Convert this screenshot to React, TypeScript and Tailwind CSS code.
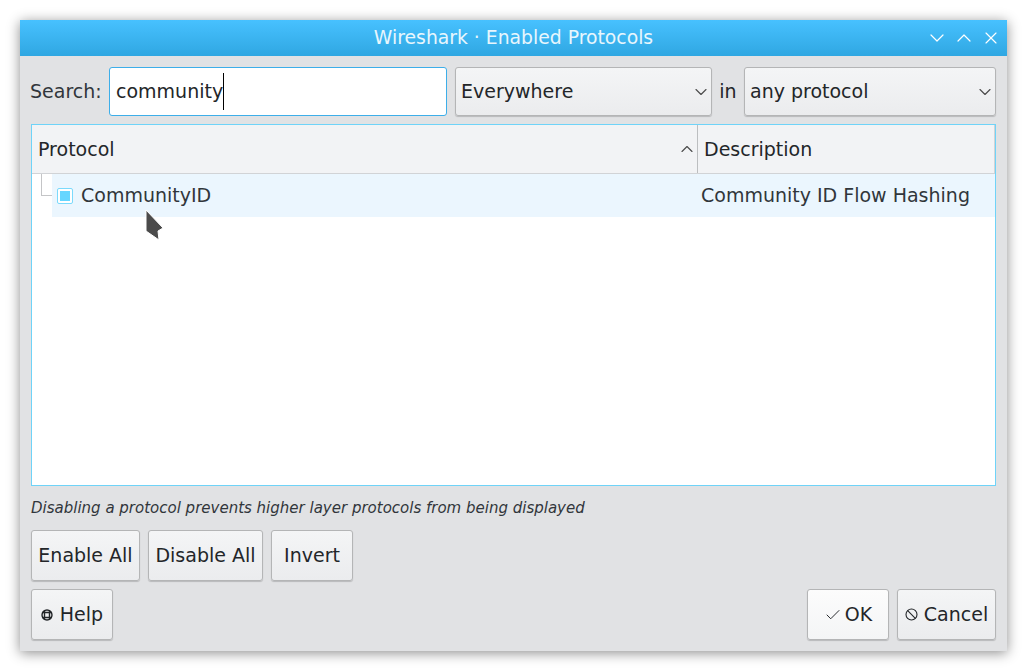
import { Check, ChevronDown, ChevronUp, X } from "lucide-react";

const buttonClass =
  "h-[51px] rounded-[3px] border border-[#b4b5b6] bg-gradient-to-b from-[#f4f5f6] to-[#ebecee] shadow-[0_1px_1px_rgba(0,0,0,0.18)] text-[#232629] flex items-center justify-center";

function ComboBox({ value, className }: { value: string; className: string }) {
  return (
    <div className={`${buttonClass} !h-[49px] !justify-between pl-[5px] ${className}`}>
      <span>{value}</span>
      <ChevronDown size={20} strokeWidth={1.4} className="text-[#4d4d4d]" />
    </div>
  );
}

function HelpIcon() {
  return (
    <svg width="12" height="12" viewBox="0 0 12 12" fill="none" stroke="#232629">
      <circle cx="6" cy="6" r="5" strokeWidth="1.4" />
      <path d="M3.5 1v10M8.5 1v10M1 3.5h10M1 8.5h10" strokeWidth="1.4" />
    </svg>
  );
}

function CancelIcon() {
  return (
    <svg width="13" height="13" viewBox="0 0 13 13" fill="none" stroke="#232629" strokeWidth="1.1">
      <circle cx="6.5" cy="6.5" r="5.5" />
      <path d="M2.7 2.7l7.6 7.6" />
    </svg>
  );
}

export default function App() {
  return (
    <div className="relative w-[1027px] h-[671px] bg-white pt-5 pl-5 font-['DejaVu_Sans',sans-serif] text-[19px] text-[#232629] overflow-hidden">
      <div className="w-[987px] h-[631px] flex flex-col bg-[#e1e2e4] shadow-[0_2px_12px_rgba(0,0,0,0.45)]">
        {/* title bar */}
        <div className="relative h-9 shrink-0 flex items-center justify-center bg-gradient-to-b from-[#47c1ff] to-[#2fa7e2] text-[#e8f6fd] text-[18.8px]">
          <span>Wireshark · Enabled Protocols</span>
          <div className="absolute right-[6px] top-[6px] flex items-center text-white">
            <ChevronDown size={24} strokeWidth={1.2} />
            <ChevronUp size={24} strokeWidth={1.2} className="ml-[3px]" />
            <X size={20} strokeWidth={1.4} className="ml-[5px]" />
          </div>
        </div>

        <div className="flex-1 flex flex-col pt-[11px] pl-[10px] pr-[11px]">
          {/* search row */}
          <div className="flex items-center h-[49px]">
            <span className="w-[79px] text-[#31363b]">Search:</span>
            <div className="w-[338px] h-[49px] rounded-[3px] border border-[#3daee9] bg-white flex items-center pl-[6px] text-[#232629]">
              <span>community</span>
              <span className="w-px h-[37px] bg-black" />
            </div>
            <ComboBox value="Everywhere" className="w-[257px] ml-2" />
            <span className="w-[32px] text-center">in</span>
            <ComboBox value="any protocol" className="w-[252px]" />
          </div>

          {/* protocol table */}
          <div className="mt-2 ml-px h-[362px] border border-[#6fd3f8] bg-white flex flex-col">
            <div className="h-[49px] shrink-0 flex bg-[#f2f3f5] border-b border-[#d1d3d6]">
              <div className="w-[666px] flex items-center justify-between pl-[6px] border-r border-[#bcbec0]">
                <span className="pt-px">Protocol</span>
                <ChevronUp size={20} strokeWidth={1.4} className="text-[#4d4d4d]" />
              </div>
              <div className="flex-1 flex items-center pl-[6px] pt-px border-r border-[#d1d3d6]">
                Description
              </div>
            </div>
            <div className="relative h-[43px] ml-5 flex items-center bg-[#ebf6fe] text-[#31363b]">
              {/* tree branch */}
              <div className="absolute -left-[11px] top-0 w-[11px] h-[22px] border-l border-b border-[#c4c5c7]" />
              <div className="ml-[5px] size-4 rounded-[2px] border-[1.5px] border-[#7bdafc] bg-white flex items-center justify-center">
                <div className="size-[10px] bg-[#66d6ff]" />
              </div>
              <span className="ml-2 w-[620px]">CommunityID</span>
              <span>Community ID Flow Hashing</span>
            </div>
          </div>

          <p className="mt-[11px] ml-px h-[22px] text-[15px] leading-[22px] italic text-[#31363b]">
            Disabling a protocol prevents higher layer protocols from being displayed
          </p>

          <div className="mt-[11px] ml-px flex gap-2">
            <div className={`${buttonClass} w-[109px]`}>Enable All</div>
            <div className={`${buttonClass} w-[115px]`}>Disable All</div>
            <div className={`${buttonClass} w-[82px]`}>Invert</div>
          </div>

          <div className="mt-2 ml-px flex gap-2">
            <div className={`${buttonClass} w-[82px] gap-[7px]`}>
              <HelpIcon />
              Help
            </div>
            <div
              className={`${buttonClass} w-[82px] gap-[3px] ml-auto !from-[#fcfcfc] !to-[#f4f5f6]`}
            >
              <Check size={18} strokeWidth={1.3} />
              OK
            </div>
            <div className={`${buttonClass} w-[99px] gap-[6px]`}>
              <CancelIcon />
              Cancel
            </div>
          </div>
        </div>
      </div>

      {/* mouse pointer */}
      <svg className="absolute left-[144px] top-[208px]" width="22" height="34" viewBox="0 0 22 34">
        <path d="M2 2 L19 20 L14 23 L15 32 L2 23 Z" fill="#4b4b4b" stroke="#ffffff" strokeWidth="1" />
      </svg>
    </div>
  );
}
